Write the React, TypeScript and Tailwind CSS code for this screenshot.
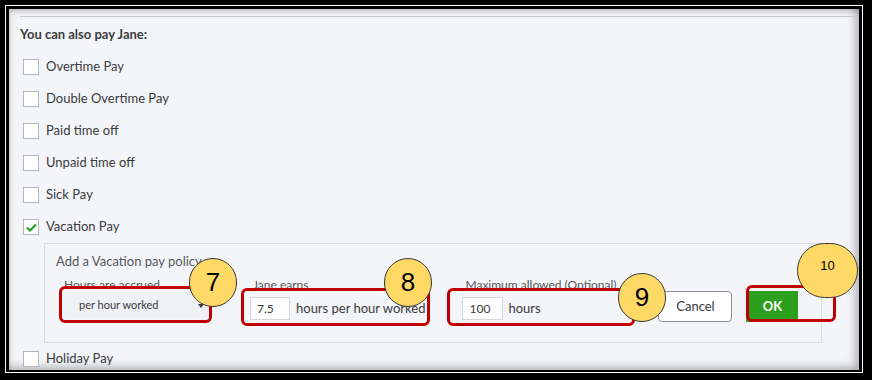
const font = { fontFamily: "Lato, 'Open Sans', sans-serif" };

const options = [
  { label: "Overtime Pay", checked: false },
  { label: "Double Overtime Pay", checked: false },
  { label: "Paid time off", checked: false },
  { label: "Unpaid time off", checked: false },
  { label: "Sick Pay", checked: false },
  { label: "Vacation Pay", checked: true },
];

const Checkbox = ({ checked }: { checked: boolean }) => (
  <span className="flex h-4 w-4 shrink-0 items-center justify-center border border-[#b4b6ba] bg-white">
    {checked && (
      <svg width="11" height="9" viewBox="0 0 11 9">
        <path d="M1 4.5 L4 7.5 L10 1.5" fill="none" stroke="#2ca01c" strokeWidth="2.2" />
      </svg>
    )}
  </span>
);

const Row = ({ label, checked }: { label: string; checked: boolean }) => (
  <div className="flex h-8 items-center gap-[7px] pl-[14px]">
    <Checkbox checked={checked} />
    <span className="text-[13px] text-[#393a3d]">{label}</span>
  </div>
);

const App: React.FC = () => {
  return (
    <div className="relative h-[380px] w-[872px] overflow-hidden bg-black pb-[7px] pl-[5px] pr-[9px] pt-[5px]" style={font}>
      {/* frame */}
      <div className="h-full w-full border border-white bg-black pb-[2px] pl-[3px] pr-[3px] pt-[3px]">
        {/* panel */}
        <div className="h-full w-full bg-[#f4f5f8] pt-[7px] shadow-[inset_-6px_-5px_8px_-2px_rgba(0,0,0,0.28),inset_3px_5px_6px_-3px_rgba(0,0,0,0.25)]">
          <div className="ml-[11px] border-t border-[#c8c9cc]" />
          <div className="ml-[11px] mt-[8px] text-[13px] font-bold leading-[18px] text-[#393a3d]">You can also pay Jane:</div>
          <div className="mt-[8px] flex flex-col">
            {options.map((o) => (
              <Row key={o.label} label={o.label} checked={o.checked} />
            ))}
          </div>

          {/* vacation policy */}
          <div className="ml-[35px] h-[100px] w-[778px] border border-[#dcdde0] bg-[#f4f5f8] pl-[11px] pt-[8px]">
            <div className="text-[13px] leading-[18px] text-[#55575b]">Add a Vacation pay policy</div>
            <div className="ml-[8px] mt-[8px] flex items-start">
              <div className="flex w-[144px] flex-col">
                <span className="text-[12px] leading-[14px] text-[#55575b]">Hours are accrued</span>
                <div className="relative flex h-[26px] items-center bg-[#f0f1f4] pl-[15px] text-[11px] text-[#393a3d]">
                  per hour worked
                  <span className="absolute right-[4px] top-[12px] h-0 w-0 border-x-[3px] border-t-[4px] border-x-transparent border-t-[#393a3d]" />
                </div>
              </div>
              <div className="ml-[42px] flex flex-col">
                <span className="pl-[3px] text-[12px] leading-[14px] text-[#55575b]">Jane earns</span>
                <div className="mt-[5px] flex items-center gap-[6px]">
                  <div className="flex h-[23px] w-[40px] items-center border border-[#d4d7dc] bg-white pl-[6px] text-[12px] text-[#393a3d]">7.5</div>
                  <span className="text-[13px] text-[#393a3d]">hours per hour worked</span>
                </div>
              </div>
              <div className="ml-[37px] flex w-[196px] flex-col">
                <span className="pl-[3px] text-[12px] leading-[14px] text-[#55575b]">Maximum allowed (Optional)</span>
                <div className="mt-[5px] flex items-center gap-[5px]">
                  <div className="flex h-[23px] w-[41px] items-center border border-[#d4d7dc] bg-white pl-[6px] text-[12px] text-[#393a3d]">100</div>
                  <span className="text-[13px] text-[#393a3d]">hours</span>
                </div>
              </div>
              <button className="mt-[13px] flex h-[31px] w-[74px] items-center justify-center rounded-[4px] border border-[#8d9096] bg-white text-[13px] text-[#393a3d]">
                Cancel
              </button>
              <button className="ml-[14px] mt-[13px] flex h-[31px] w-[52px] items-center justify-center bg-[#2ca01c] text-[13px] font-bold text-white">
                OK
              </button>
            </div>
          </div>

          <Row label="Holiday Pay" checked={false} />
        </div>
      </div>

      {/* annotations */}
      <div className="absolute left-[59px] top-[286px] h-[37px] w-[153px] rounded-[6px] border-[3px] border-[#c00000]" />
      <div className="absolute left-[241px] top-[288px] h-[38px] w-[189px] rounded-[6px] border-[3px] border-[#c00000]" />
      <div className="absolute left-[447px] top-[288px] h-[38px] w-[188px] rounded-[6px] border-[3px] border-[#c00000]" />
      <div className="absolute left-[746px] top-[285px] h-[37px] w-[90px] rounded-[6px] border-[3px] border-[#c00000]" />

      <div className="absolute left-[189px] top-[258px] flex h-[49px] w-[48px] items-center justify-center rounded-full border border-[#3a3a3a] bg-[#ffd966] text-[26px] text-black" style={{ fontFamily: "'Liberation Sans', sans-serif" }}>7</div>
      <div className="absolute left-[384px] top-[258px] flex h-[49px] w-[48px] items-center justify-center rounded-full border border-[#3a3a3a] bg-[#ffd966] text-[26px] text-black" style={{ fontFamily: "'Liberation Sans', sans-serif" }}>8</div>
      <div className="absolute left-[618px] top-[273px] flex h-[49px] w-[48px] items-center justify-center rounded-full border border-[#3a3a3a] bg-[#ffd966] text-[26px] text-black" style={{ fontFamily: "'Liberation Sans', sans-serif" }}>9</div>
      <div className="absolute left-[797px] top-[243px] flex h-[55px] w-[61px] justify-center rounded-full border border-[#3a3a3a] bg-[#ffd966] pt-[12px] text-[13px] text-black" style={{ fontFamily: "'Liberation Sans', sans-serif" }}>10</div>
    </div>
  );
};

export default App;
